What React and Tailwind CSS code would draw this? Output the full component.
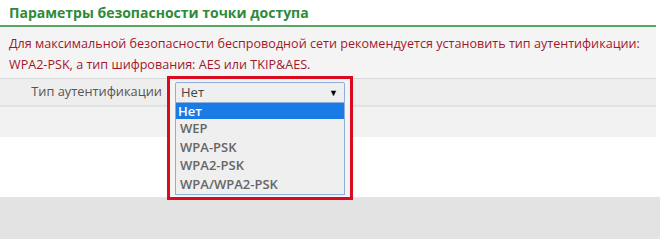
import React from 'react';

const options = ['WEP', 'WPA-PSK', 'WPA2-PSK', 'WPA/WPA2-PSK'];

const App = () => {
    return (
        <div className="relative w-[660px] h-[240px] bg-white overflow-hidden" style={{ fontFamily: '"Open Sans", "Noto Sans", sans-serif' }}>
            <div className="w-[656px]">
                {/* Title */}
                <div className="h-[25px] flex items-center pl-[9px] text-[14px] font-bold text-[#2e8a3c]">
                    Параметры безопасности точки доступа
                </div>
                <div className="h-[2px] bg-[#5aa564]"></div>

                {/* Warning */}
                <div className="bg-[#f4f4f4] h-[51px] pl-[9px] pt-[6px] text-[12.6px] text-[#a3172a] leading-[21px]">
                    <p>Для максимальной безопасности беспроводной сети рекомендуется установить тип аутентификации:</p>
                    <p>WPA2-PSK, а тип шифрования: AES или TKIP&AES.</p>
                </div>

                {/* Auth type row */}
                <div className="border-t border-[#dadada] bg-[#eeeeee] h-[27px] flex items-center">
                    <span className="w-[164px] text-right pr-[2px] text-[12.8px] text-[#555]">Тип аутентификации</span>
                </div>
                <div className="border-t-2 border-[#e2e2e2] bg-[#f2f2f2] h-[32px]"></div>
            </div>
            <div className="h-[60px]"></div>
            <div className="bg-[#e3e3e3] h-[42px]"></div>

            {/* Opened dropdown, highlighted */}
            <div className="absolute left-[167px] top-[76px] w-[186px] h-[124px] border-[3px] border-[#dc0a1e] bg-[#f4f4f4] px-[5px] pt-[3px]">
                <div className="h-[21px] border border-[#8eaedb] rounded-t-[2px] bg-[#efefef] flex items-center justify-between pl-[5px] pr-[6px] text-[13px] text-[#444]">
                    <span>Нет</span>
                    <span className="text-[9px] text-black">▼</span>
                </div>
                <div className="border border-t-0 border-[#8eaedb] bg-[#efefef] h-[92px] text-[13px] text-[#666]">
                    <div className="h-[16px] bg-[#1a7be6] text-white font-semibold leading-[16px] pl-[2px]">Нет</div>
                    {options.map(o => (
                        <div key={o} className="h-[18.5px] leading-[18.5px] pl-[4px] font-semibold">{o}</div>
                    ))}
                </div>
            </div>
        </div>
    );
};

export default App;
